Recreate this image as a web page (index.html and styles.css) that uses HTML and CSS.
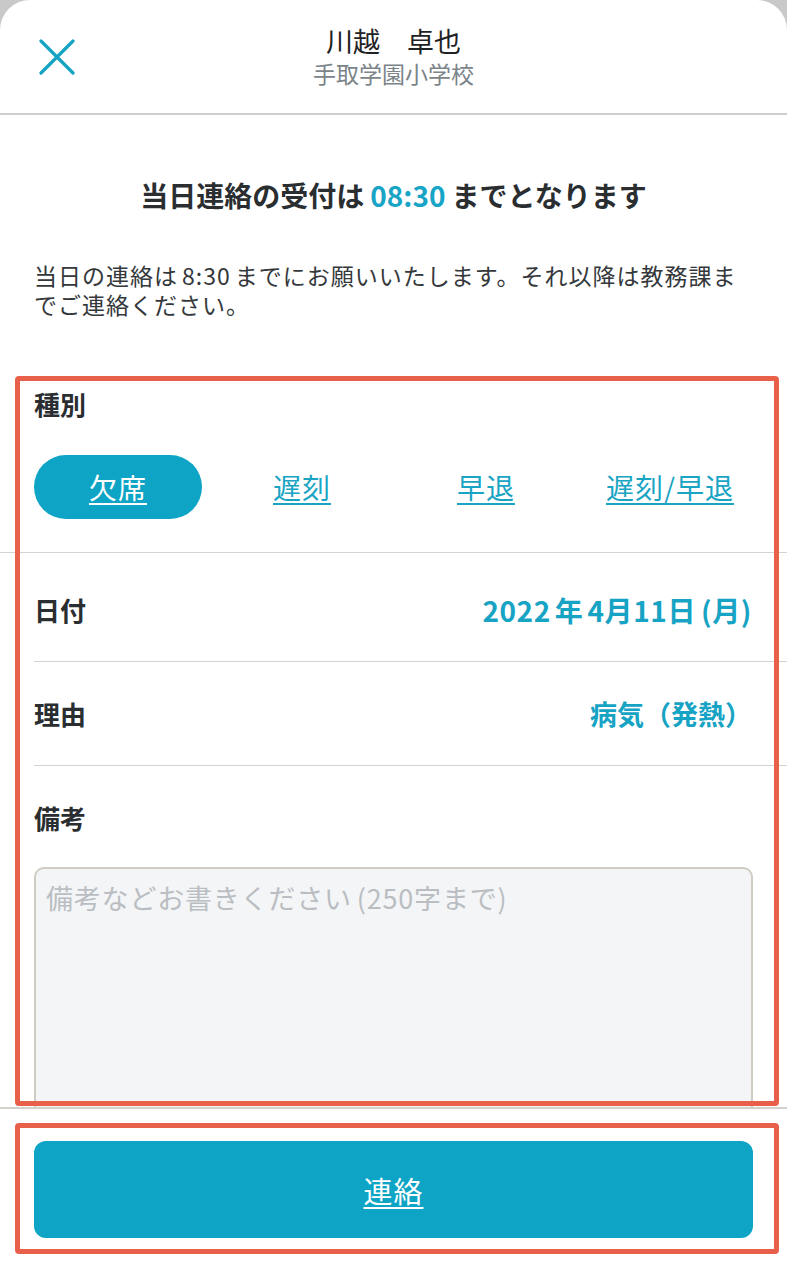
FILE: index.html
```html
<!DOCTYPE html>
<html lang="ja">
<head>
<meta charset="utf-8">
<title>当日連絡</title>
<link rel="stylesheet" href="styles.css">
</head>
<body>
<div class="sheet">
  <header class="top">
    <button class="close" aria-label="閉じる">
      <svg width="36" height="36" viewBox="0 0 36 36"><path d="M2 2 L34 34 M34 2 L2 34" stroke="#14a3c3" stroke-width="3.2" stroke-linecap="round" fill="none"/></svg>
    </button>
    <div class="who">
      <div class="name">川越　卓也</div>
      <div class="school">手取学園小学校</div>
    </div>
  </header>

  <main class="scroll">
    <h1 class="notice">当日連絡の受付は<span class="time">08:30</span>までとなります</h1>
    <p class="desc">当日の連絡は<span class="num">8:30</span>までにお願いいたします。それ以降は教務課までご連絡ください。</p>

    <section class="kind">
      <h2 class="label">種別</h2>
      <div class="options">
        <a class="opt active">欠席</a>
        <a class="opt">遅刻</a>
        <a class="opt">早退</a>
        <a class="opt">遅刻/早退</a>
      </div>
    </section>

    <div class="rows">
      <div class="row">
        <span class="label">日付</span>
        <span class="value date">2022<span class="gap">年</span>4月11日<span class="gapl">(月)</span></span>
      </div>
      <div class="row">
        <span class="label">理由</span>
        <span class="value">病気（発熱）</span>
      </div>
    </div>

    <section class="memo">
      <h2 class="label">備考</h2>
      <div class="textarea">備考などお書きください<span class="gapl">(250</span>字まで)</div>
    </section>
  </main>

  <footer class="bottom">
    <button class="send"><span>連絡</span></button>
  </footer>

  <div class="mark mark-form"></div>
  <div class="mark mark-send"></div>
</div>
</body>
</html>
```

FILE: styles.css
```css
html {
  background: #c9c9c9;
}
body {
  margin: 0;
  font-family: "Noto Sans CJK JP", "Noto Sans", sans-serif;
  color: #2a2e31;
}
.sheet {
  position: relative;
  width: 787px;
  height: 1273px;
  background: #fff;
  border-radius: 30px 30px 0 0;
  overflow: hidden;
  display: flex;
  flex-direction: column;
}
.top {
  height: 113px;
  border-bottom: 2px solid #cfcfcf;
  box-sizing: content-box;
  display: flex;
  align-items: center;
  justify-content: center;
  position: relative;
  flex: none;
}
.close {
  position: absolute;
  left: 39px;
  top: 39px;
  width: 36px;
  height: 36px;
  padding: 0;
  border: 0;
  background: none;
  display: flex;
}
.who {
  text-align: center;
  margin-top: -2px;
}
.name {
  font-size: 27px;
  line-height: 34px;
  color: #1f2225;
}
.school {
  font-size: 23px;
  line-height: 30px;
  color: #7b8489;
}
.scroll {
  height: 994px;
  flex: none;
  overflow: hidden;
  border-bottom: 2px solid #d4d1cb;
  box-sizing: border-box;
}
.notice {
  margin: 60px 0 0;
  text-align: center;
  font-size: 28px;
  line-height: 40px;
  font-weight: 700;
  color: #2a2e31;
}
.time {
  color: #17a4c6;
  margin: 0 6px;
}
.desc {
  margin: 46px 34px 0;
  font-size: 23px;
  line-height: 29px;
  letter-spacing: 1px;
  color: #34383b;
}
.num {
  margin: 0 4px;
}
.label {
  margin: 0;
  font-size: 26px;
  line-height: 34px;
  font-weight: 700;
  color: #2a2e31;
}
.kind {
  margin-top: 68px;
  border-bottom: 1px solid #d6d3ce;
  padding: 0 34px 33px;
}
.options {
  margin-top: 34px;
  display: grid;
  grid-template-columns: repeat(4, 168px);
  column-gap: 16px;
}
.opt {
  height: 64px;
  border-radius: 32px;
  display: flex;
  align-items: center;
  justify-content: center;
  font-size: 28px;
  letter-spacing: 1px;
  color: #19a4c4;
  text-decoration: underline;
  text-underline-offset: 4px;
  text-decoration-thickness: 2px;
}
.opt.active {
  background: #0ea4c5;
  color: #fff;
}
.rows {
  padding-top: 5px;
}
.row {
  margin-left: 34px;
  padding: 35px 35px 34px 0;
  border-bottom: 1px solid #d6d3ce;
  display: flex;
  justify-content: space-between;
  align-items: center;
}
.value {
  font-size: 27px;
  line-height: 34px;
  font-weight: 700;
  color: #17a3c4;
}
.value.date {
  font-size: 28px;
  letter-spacing: 0.6px;
}
.gap {
  margin: 0 4px;
}
.gapl {
  margin-left: 5px;
}
.memo {
  padding: 35px 34px 0;
}
.textarea {
  margin-top: 32px;
  height: 280px;
  border: 2px solid #d0ccc3;
  border-radius: 10px;
  background: #f4f5f7;
  padding: 12px 10px;
  font-size: 27px;
  line-height: 34px;
  letter-spacing: 0.8px;
  color: #babec2;
}
.bottom {
  padding: 32px 34px 0;
}
.send {
  width: 719px;
  height: 97px;
  border: 0;
  border-radius: 12px;
  background: #0ea4c5;
  color: #fff;
  font-family: inherit;
  font-size: 29px;
  letter-spacing: 1px;
  display: flex;
  align-items: center;
  justify-content: center;
}
.send span {
  text-decoration: underline;
  text-underline-offset: 4px;
  text-decoration-thickness: 2px;
}
.mark {
  position: absolute;
  left: 15px;
  width: 764px;
  border: 5px solid #e8604a;
  border-radius: 4px;
  box-sizing: border-box;
  pointer-events: none;
}
.mark-form {
  top: 376px;
  height: 730px;
}
.mark-send {
  top: 1123px;
  height: 131px;
}
```
